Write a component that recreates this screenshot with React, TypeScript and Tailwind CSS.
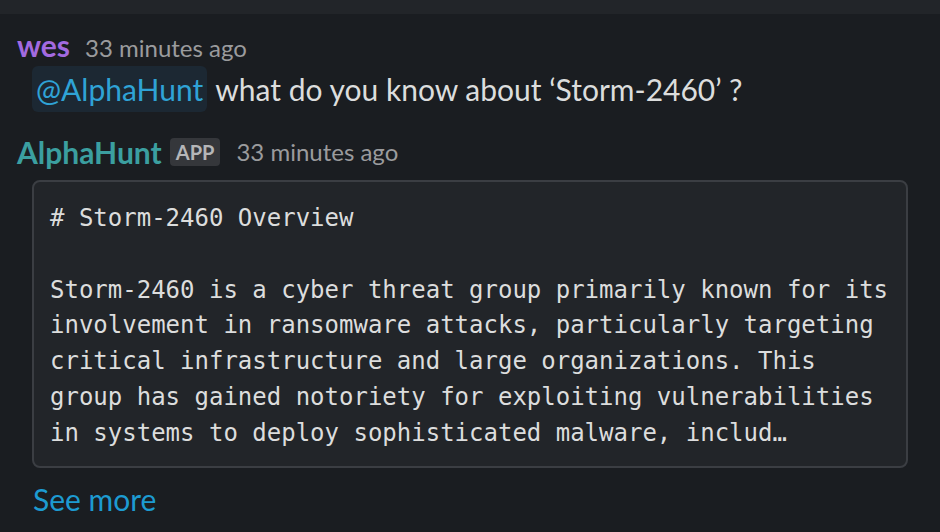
import React from 'react';

const lato = { fontFamily: 'Lato, "Open Sans", sans-serif' };
const mono = { fontFamily: '"DejaVu Sans Mono", "Liberation Mono", monospace' };

const bodyLines = [
  'Storm-2460 is a cyber threat group primarily known for its',
  'involvement in ransomware attacks, particularly targeting',
  'critical infrastructure and large organizations. This',
  'group has gained notoriety for exploiting vulnerabilities',
  'in systems to deploy sophisticated malware, includ…',
];

export default function App() {
  return (
    <div className="w-[940px] h-[532px] overflow-hidden bg-[#1a1d21] text-[#d1d2d3]" style={lato}>
      <div className="h-[14px] bg-[#222529]" />

      <div className="pl-[17px] pt-[16px]">
        {/* user message */}
        <div className="flex items-baseline gap-[15px] leading-[30px]">
          <span className="text-[30px] font-bold text-[#a36ae0]">wes</span>
          <span className="text-[24px] text-[#9a9b9d]">33 minutes ago</span>
        </div>
        <div className="mt-[3px] flex items-center text-[30px] leading-[46px]">
          <span className="ml-[15px] rounded-[6px] bg-[#1c2833] px-[4px] text-[#2fa3d6]">@AlphaHunt</span>
          <span className="ml-[8px] text-[#dcdddd]">what do you know about ‘Storm-2460’ ?</span>
        </div>

        {/* app reply */}
        <div className="mt-[25px] flex items-center leading-[30px]">
          <span className="text-[30px] font-bold text-[#3b9fa0]">AlphaHunt</span>
          <span className="ml-[8px] rounded-[4px] bg-[#35373b] px-[6px] text-[20px] font-bold leading-[28px] text-[#b5b6b8]">APP</span>
          <span className="ml-[16px] text-[24px] text-[#9a9b9d]">33 minutes ago</span>
        </div>

        <div className="mt-[13px] mr-[32px] ml-[15px] rounded-[8px] border-2 border-[#3b3e43] bg-[#222529] pl-[16px] pt-[19px] pb-[15px]">
          <div className="text-[24px] leading-[35.75px] text-[#dcdddd] whitespace-pre" style={mono}>
            <div># Storm-2460 Overview</div>
            <div>&nbsp;</div>
            {bodyLines.map((l) => (
              <div key={l}>{l}</div>
            ))}
          </div>
        </div>

        <div className="ml-[16px] mt-[13px] text-[30px] leading-[36px] text-[#1d9bd1]">See more</div>
      </div>
    </div>
  );
}
